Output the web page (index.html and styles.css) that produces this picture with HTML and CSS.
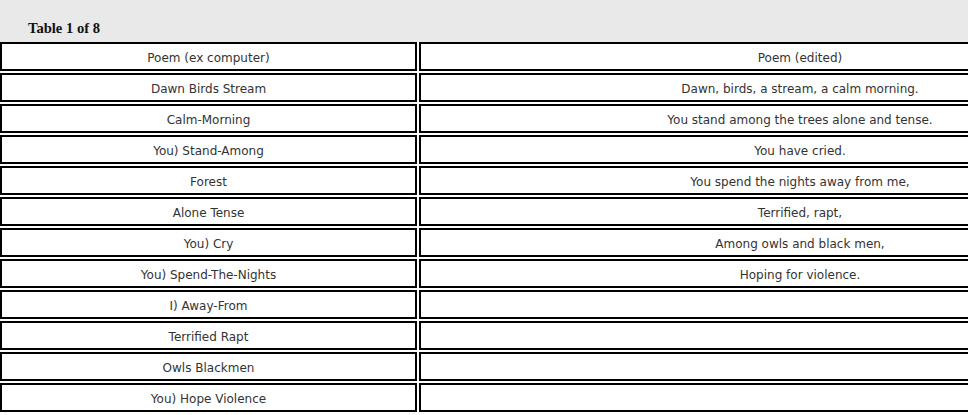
FILE: index.html
```html
<!DOCTYPE html>
<html>
<head>
<meta charset="utf-8">
<link rel="stylesheet" href="styles.css">
</head>
<body>
<div class="header"><h2 class="title">Table 1 of 8</h2></div>
<div class="table">
  <div class="cell">Poem (ex computer)</div><div class="cell">Poem (edited)</div>
  <div class="cell">Dawn Birds Stream</div><div class="cell">Dawn, birds, a stream, a calm morning.</div>
  <div class="cell">Calm-Morning</div><div class="cell">You stand among the trees alone and tense.</div>
  <div class="cell">You) Stand-Among</div><div class="cell">You have cried.</div>
  <div class="cell">Forest</div><div class="cell">You spend the nights away from me,</div>
  <div class="cell">Alone Tense</div><div class="cell">Terrified, rapt,</div>
  <div class="cell">You) Cry</div><div class="cell">Among owls and black men,</div>
  <div class="cell">You) Spend-The-Nights</div><div class="cell">Hoping for violence.</div>
  <div class="cell">I) Away-From</div><div class="cell"></div>
  <div class="cell">Terrified Rapt</div><div class="cell"></div>
  <div class="cell">Owls Blackmen</div><div class="cell"></div>
  <div class="cell">You) Hope Violence</div><div class="cell"></div>
</div>
</body>
</html>
```
FILE: styles.css
```css
html, body {
  margin: 0;
  padding: 0;
  overflow: hidden;
  background: #fff;
}
.header {
  background: #e9e9e9;
  height: 42px;
  box-sizing: border-box;
  padding: 19px 0 0 28px;
}
.title {
  margin: 0;
  font-family: "Liberation Serif", serif;
  font-weight: bold;
  font-size: 14.6px;
  line-height: 18px;
  color: #111;
}
.table {
  display: grid;
  grid-template-columns: 417px 762px;
  gap: 2px;
  width: 1181px;
}
.cell {
  height: 29px;
  box-sizing: border-box;
  border: 2px solid #000;
  padding-top: 2px;
  display: flex;
  align-items: center;
  justify-content: center;
  font-family: "DejaVu Sans", Verdana, sans-serif;
  font-size: 12px;
  color: #333;
  white-space: nowrap;
}
```
